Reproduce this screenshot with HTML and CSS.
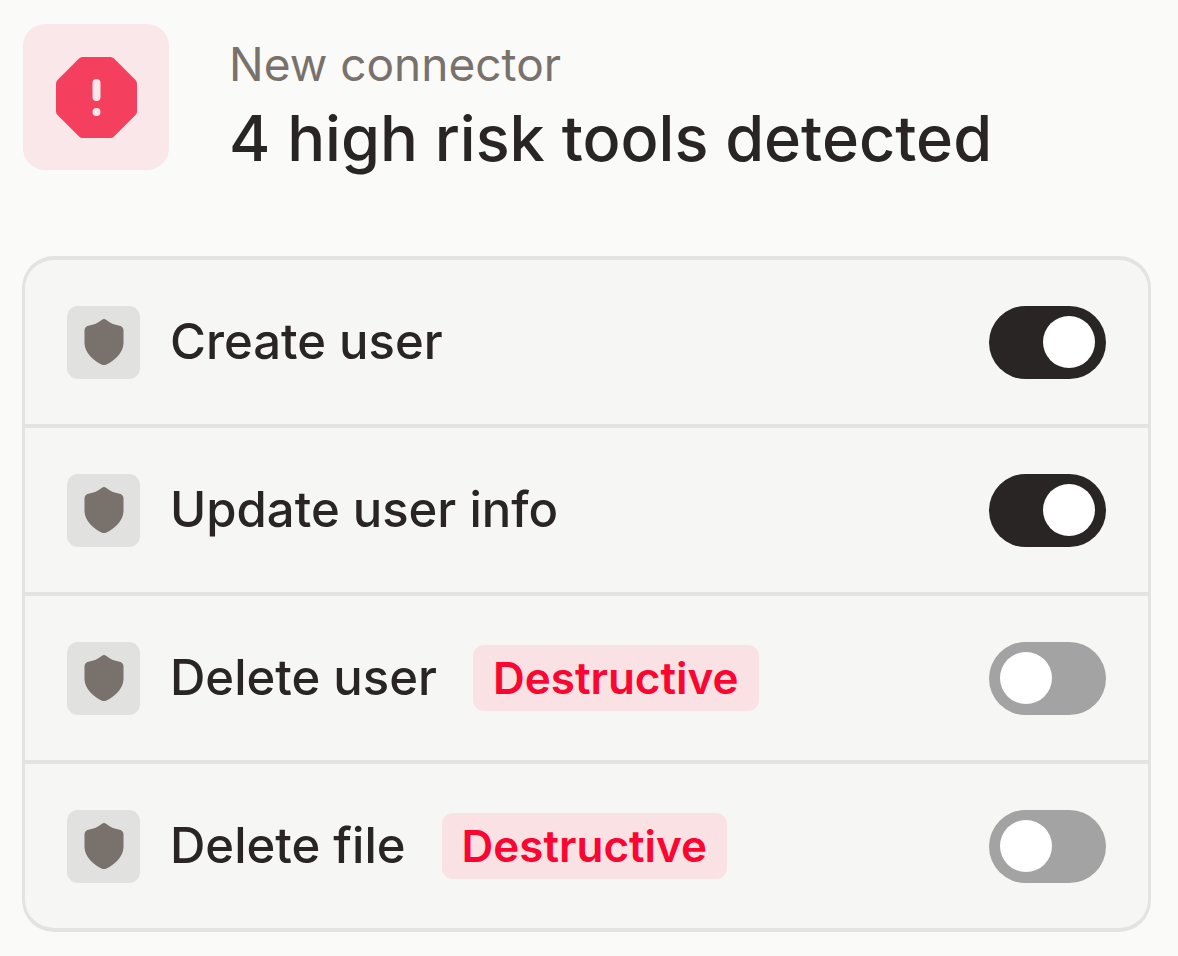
FILE: index.html
```html
<!DOCTYPE html>
<html lang="en">
<head>
<meta charset="utf-8">
<meta name="viewport" content="width=device-width, initial-scale=1">
<title>New connector</title>
<link rel="stylesheet" href="styles.css">
</head>
<body>
<svg class="sprite" aria-hidden="true">
  <symbol id="shield" viewBox="0 0 40 46">
    <path d="M17.6 1C19.3 -.2 20.7 -.2 22.4 1C26 4 30 5.800 35.500 6.700C38 7.200 39.500 9 39.500 11.500V24C39.500 34 30 42 22.500 45.400C20.700 46.200 19.300 46.200 17.500 45.400C10 42 .5 34 .5 24V11.500C.5 9 2 7.200 4.500 6.700C10 5.800 14 4 17.600 1Z"/>
  </symbol>
</svg>
<main class="page">
  <header class="header">
    <span class="alert">
      <svg class="alert-icon" viewBox="0 0 81 81" aria-hidden="true">
        <path class="alert-shape" d="M26.500 0H54.500Q56.500 0 58 1.500L79.500 23Q81 24.500 81 26.500V54.500Q81 56.500 79.500 58L58 79.500Q56.500 81 54.500 81H26.500Q24.500 81 23 79.500L1.500 58Q0 56.500 0 54.500V26.500Q0 24.500 1.500 23L23 1.500Q24.500 0 26.500 0Z"/>
        <rect class="alert-mark" x="36.500" y="22" width="8" height="22" rx="4"/>
        <circle class="alert-mark" cx="40.500" cy="55" r="4"/>
      </svg>
    </span>
    <div class="heading">
      <p class="eyebrow">New connector</p>
      <h1 class="title">4 high risk tools detected</h1>
    </div>
  </header>
  <ul class="tools">
    <li class="tool">
      <span class="chip"><svg class="shield" aria-hidden="true"><use href="#shield"/></svg></span>
      <label class="name" for="create-user">Create user</label>
      <input class="toggle" type="checkbox" role="switch" id="create-user" checked>
    </li>
    <li class="tool">
      <span class="chip"><svg class="shield" aria-hidden="true"><use href="#shield"/></svg></span>
      <label class="name" for="update-user">Update user info</label>
      <input class="toggle" type="checkbox" role="switch" id="update-user" checked>
    </li>
    <li class="tool">
      <span class="chip"><svg class="shield" aria-hidden="true"><use href="#shield"/></svg></span>
      <label class="name" for="delete-user">Delete user</label>
      <span class="badge">Destructive</span>
      <input class="toggle" type="checkbox" role="switch" id="delete-user">
    </li>
    <li class="tool">
      <span class="chip"><svg class="shield" aria-hidden="true"><use href="#shield"/></svg></span>
      <label class="name" for="delete-file">Delete file</label>
      <span class="badge">Destructive</span>
      <input class="toggle" type="checkbox" role="switch" id="delete-file">
    </li>
  </ul>
</main>
</body>
</html>
```

FILE: styles.css
```css
* {
  box-sizing: border-box;
}

body {
  margin: 0;
  background: #fafaf8;
  color: #292524;
  font-family: Inter, "Liberation Sans", sans-serif;
}

.sprite {
  display: none;
}

.page {
  padding: 24px 27px 24px 22px;
}

.header {
  display: flex;
  align-items: flex-start;
  gap: 60px;
  padding-left: 1px;
}

.alert {
  display: flex;
  flex: none;
  align-items: center;
  justify-content: center;
  width: 146px;
  height: 146px;
  border-radius: 22px;
  background: #fae7ea;
}

.alert-icon {
  width: 81px;
  height: 81px;
}

.alert-shape {
  fill: #f53f5e;
}

.alert-mark {
  fill: #fae7ea;
}

.heading {
  display: grid;
  gap: 6px;
  padding-top: 12px;
}

.eyebrow {
  margin: 0;
  color: #79716b;
  font-size: 46px;
  line-height: 56px;
}

.title {
  margin: 0;
  font-size: 63px;
  font-weight: 500;
  line-height: 80px;
}

.tools {
  margin: 78px 0 0;
  padding: 0;
  border: solid #e3e3e1;
  border-width: 4px 3px;
  border-radius: 32px;
  background: #f6f6f4;
  list-style: none;
}

.tool {
  display: flex;
  align-items: center;
  min-height: 164px;
  padding: 0 42px;
}

.tool + .tool {
  min-height: 168px;
  border-top: 4px solid #e3e3e1;
}

.chip {
  display: flex;
  flex: none;
  align-items: center;
  justify-content: center;
  width: 73px;
  height: 73px;
  margin-right: 30px;
  border-radius: 11px;
  background: #e1e1df;
}

.shield {
  width: 40px;
  height: 46px;
  fill: #79716b;
}

.name {
  font-size: 49px;
  font-weight: 500;
  line-height: 64px;
}

.badge {
  margin-left: 36px;
  padding: 0 20px;
  border-radius: 11px;
  background: #fae1e4;
  color: #fb0531;
  font-size: 44px;
  font-weight: 600;
  line-height: 66px;
}

.toggle {
  flex: none;
  width: 117px;
  height: 73px;
  margin: 0 0 0 auto;
  padding: 0 11px;
  border-radius: 37px;
  background: #a3a3a3;
  appearance: none;
  display: flex;
  align-items: center;
  cursor: pointer;
}

.toggle::before {
  content: "";
  width: 52px;
  height: 52px;
  border-radius: 50%;
  background: #fff;
}

.toggle:checked {
  justify-content: flex-end;
  background: #292524;
}
```
